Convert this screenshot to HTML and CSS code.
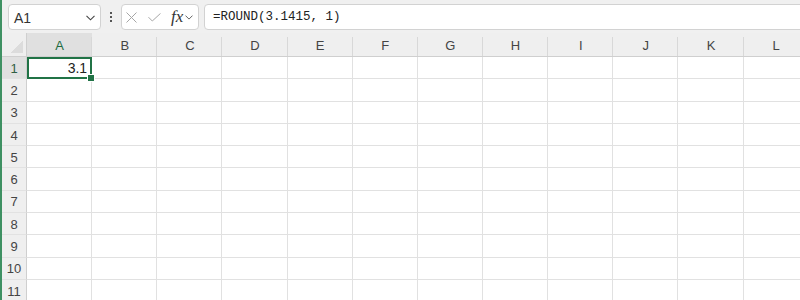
FILE: index.html
```html
<!DOCTYPE html>
<html>
<head>
<meta charset="utf-8">
<link rel="stylesheet" href="styles.css">
</head>
<body>
<div class="app">
  <div class="toolbar">
    <div class="namebox">
      <span class="name">A1</span>
      <svg class="chev" width="9" height="6" viewBox="0 0 9 6"><path d="M0.5 0.8 L4.5 4.8 L8.5 0.8" fill="none" stroke="#444" stroke-width="1.1"/></svg>
    </div>
    <div class="dots"><i></i><i></i><i></i></div>
    <div class="fxbox">
      <svg class="icon-x" width="11" height="11" viewBox="0 0 11 11"><path d="M0.5 0.5 L10.5 10.5 M10.5 0.5 L0.5 10.5" stroke="#a6a6a6" stroke-width="1" fill="none"/></svg>
      <svg class="icon-check" width="13" height="9" viewBox="0 0 13 9"><path d="M0.5 4.2 L4.3 8 L12.5 0.4" stroke="#a6a6a6" stroke-width="1" fill="none"/></svg>
      <span class="fx">fx</span>
      <svg class="chev-sm" width="8" height="5" viewBox="0 0 8 5"><path d="M0.5 0.6 L4 4.1 L7.5 0.6" fill="none" stroke="#666" stroke-width="1"/></svg>
    </div>
    <div class="formula">=ROUND(3.1415, 1)</div>
  </div>
  <div class="sheet">
    <div class="corner"></div>
    <div class="ch sel">A</div><div class="ch">B</div><div class="ch">C</div><div class="ch">D</div><div class="ch">E</div><div class="ch">F</div><div class="ch">G</div><div class="ch">H</div><div class="ch">I</div><div class="ch">J</div><div class="ch">K</div><div class="ch">L</div>

    <div class="rh sel">1</div><div class="c active"><span class="val">3.1</span><div class="selbox"></div><div class="handle"></div></div><div class="c"></div><div class="c"></div><div class="c"></div><div class="c"></div><div class="c"></div><div class="c"></div><div class="c"></div><div class="c"></div><div class="c"></div><div class="c"></div><div class="c"></div>
    <div class="rh">2</div><div class="c"></div><div class="c"></div><div class="c"></div><div class="c"></div><div class="c"></div><div class="c"></div><div class="c"></div><div class="c"></div><div class="c"></div><div class="c"></div><div class="c"></div><div class="c"></div>
    <div class="rh">3</div><div class="c"></div><div class="c"></div><div class="c"></div><div class="c"></div><div class="c"></div><div class="c"></div><div class="c"></div><div class="c"></div><div class="c"></div><div class="c"></div><div class="c"></div><div class="c"></div>
    <div class="rh">4</div><div class="c"></div><div class="c"></div><div class="c"></div><div class="c"></div><div class="c"></div><div class="c"></div><div class="c"></div><div class="c"></div><div class="c"></div><div class="c"></div><div class="c"></div><div class="c"></div>
    <div class="rh">5</div><div class="c"></div><div class="c"></div><div class="c"></div><div class="c"></div><div class="c"></div><div class="c"></div><div class="c"></div><div class="c"></div><div class="c"></div><div class="c"></div><div class="c"></div><div class="c"></div>
    <div class="rh">6</div><div class="c"></div><div class="c"></div><div class="c"></div><div class="c"></div><div class="c"></div><div class="c"></div><div class="c"></div><div class="c"></div><div class="c"></div><div class="c"></div><div class="c"></div><div class="c"></div>
    <div class="rh">7</div><div class="c"></div><div class="c"></div><div class="c"></div><div class="c"></div><div class="c"></div><div class="c"></div><div class="c"></div><div class="c"></div><div class="c"></div><div class="c"></div><div class="c"></div><div class="c"></div>
    <div class="rh">8</div><div class="c"></div><div class="c"></div><div class="c"></div><div class="c"></div><div class="c"></div><div class="c"></div><div class="c"></div><div class="c"></div><div class="c"></div><div class="c"></div><div class="c"></div><div class="c"></div>
    <div class="rh">9</div><div class="c"></div><div class="c"></div><div class="c"></div><div class="c"></div><div class="c"></div><div class="c"></div><div class="c"></div><div class="c"></div><div class="c"></div><div class="c"></div><div class="c"></div><div class="c"></div>
    <div class="rh">10</div><div class="c"></div><div class="c"></div><div class="c"></div><div class="c"></div><div class="c"></div><div class="c"></div><div class="c"></div><div class="c"></div><div class="c"></div><div class="c"></div><div class="c"></div><div class="c"></div>
    <div class="rh">11</div><div class="c"></div><div class="c"></div><div class="c"></div><div class="c"></div><div class="c"></div><div class="c"></div><div class="c"></div><div class="c"></div><div class="c"></div><div class="c"></div><div class="c"></div><div class="c"></div>
  </div>
</div>
</body>
</html>
```

FILE: styles.css
```css
* { box-sizing: border-box; }
html, body { margin: 0; padding: 0; background: #fff; }
body { width: 800px; height: 300px; overflow: hidden; font-family: "Liberation Sans", Arial, sans-serif; }

.app {
  height: 300px;
  border-left: 2px solid #3f9163;
  display: flex;
  flex-direction: column;
  overflow: hidden;
}

.toolbar {
  height: 33px;
  flex: none;
  background: #f0f0f0;
  display: flex;
  align-items: flex-start;
  padding: 4px 0 0 6px;
}

.namebox {
  width: 93px;
  height: 26px;
  background: #fff;
  border: 1px solid #d2d2d2;
  border-radius: 4px;
  display: flex;
  align-items: center;
  padding: 0 5px 0 5px;
}
.name { font-size: 14px; color: #333; flex: 1; padding-top: 1px; }
.chev { display: block; margin-top: 1px; }

.dots {
  width: 20px;
  height: 26px;
  display: flex;
  flex-direction: column;
  align-items: center;
  justify-content: center;
  gap: 2px;
}
.dots i { display: block; width: 2px; height: 2px; background: #555; }

.fxbox {
  width: 78px;
  height: 26px;
  background: #fff;
  border: 1px solid #d2d2d2;
  border-radius: 4px;
  display: flex;
  align-items: center;
  padding-left: 4px;
}
.icon-x { display: block; margin-right: 11px; }
.icon-check { display: block; margin-right: 10px; margin-top: 1px; }
.fx {
  font-family: "Liberation Serif", "Times New Roman", serif;
  font-style: italic;
  font-size: 17px;
  color: #333;
  margin-right: 2px;
  line-height: 1;
  margin-top: -2px;
}
.chev-sm { display: block; margin-top: 1px; }

.formula {
  flex: 1;
  margin-left: 5px;
  margin-right: -6px;
  height: 26px;
  background: #fff;
  border: 1px solid #d2d2d2;
  border-radius: 4px;
  font-family: "Liberation Mono", "Courier New", monospace;
  font-size: 12.5px;
  color: #222;
  padding: 0 0 0 8px;
  display: flex;
  align-items: center;
}

.sheet {
  flex: 1;
  display: grid;
  grid-template-columns: 25px repeat(12, 65.15px);
  grid-template-rows: 24px repeat(11, 22.3px);
  background: #fff;
}

.corner {
  background:
    linear-gradient(135deg, transparent 50%, #dcdcdc 50%) right 3px bottom 3px / 13px 13px no-repeat,
    #efefef;
  border-right: 1px solid #cfcfcf;
  border-bottom: 1px solid #cfcfcf;
}

.ch {
  background:
    linear-gradient(#d8d8d8, #d8d8d8) right bottom / 1px 19px no-repeat,
    #efefef;
  border-bottom: 1px solid #cfcfcf;
  font-size: 13px;
  color: #444;
  display: flex;
  align-items: center;
  justify-content: center;
  padding-top: 1px;
}
.ch.sel {
  background:
    linear-gradient(#d8d8d8, #d8d8d8) right bottom / 1px 19px no-repeat,
    #e0e0e0;
  color: #1d6b3f;
}

.rh {
  background: #efefef;
  border-right: 1px solid #cfcfcf;
  border-bottom: 1px solid #e2e2e2;
  font-size: 13px;
  color: #444;
  display: flex;
  align-items: center;
  justify-content: center;
  padding-top: 1px;
}
.rh.sel { background: #e0e0e0; color: #2f5f44; }

.c {
  border-right: 1px solid #e1e1e1;
  border-bottom: 1px solid #e1e1e1;
}

.c.active {
  position: relative;
  display: flex;
  align-items: center;
  justify-content: flex-end;
  padding-right: 4px;
}
.val { font-size: 14px; color: #222; padding-top: 1px; }
.selbox {
  position: absolute;
  left: 0;
  top: 0;
  right: -1px;
  bottom: -1px;
  border: 2px solid #217346;
}
.handle {
  position: absolute;
  right: -3px;
  bottom: -3px;
  width: 6px;
  height: 6px;
  background: #217346;
  outline: 1px solid #fff;
}
```
